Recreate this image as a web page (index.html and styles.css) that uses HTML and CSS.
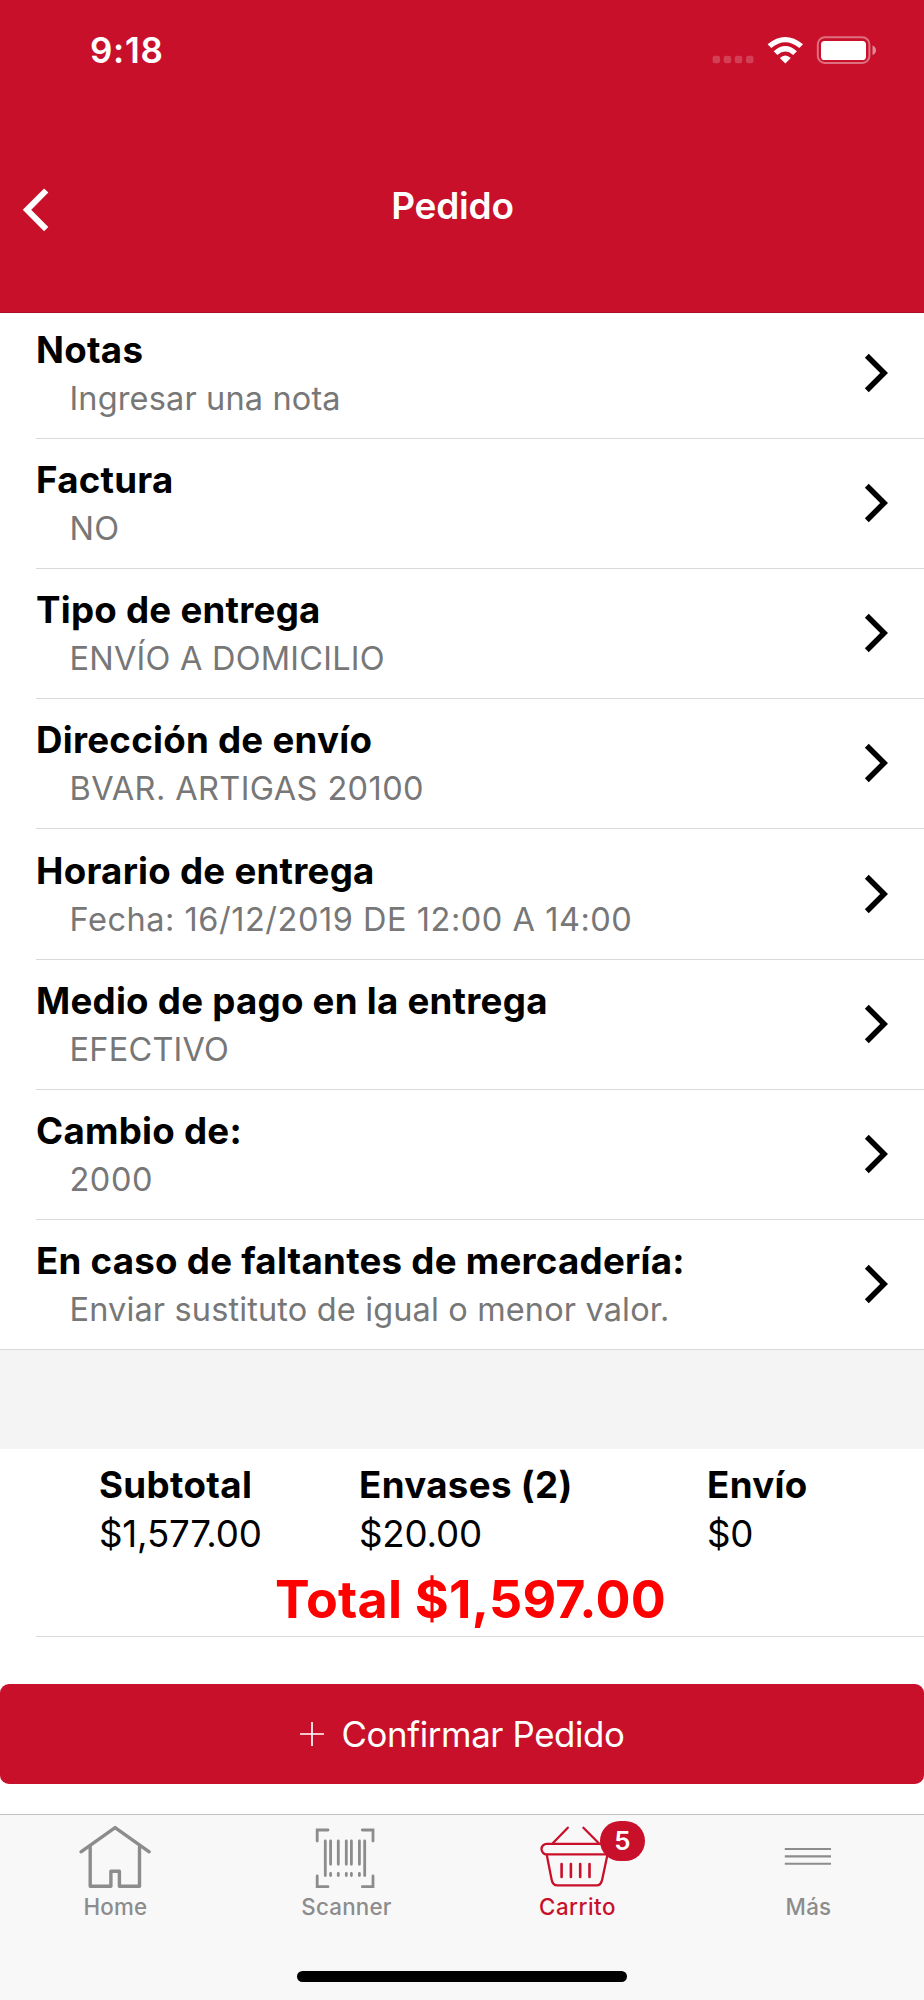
FILE: index.html
```html
<!DOCTYPE html>
<html lang="es">
<head>
<meta charset="utf-8">
<title>Pedido</title>
<link rel="stylesheet" href="styles.css">
</head>
<body>
<div class="screen">
  <header class="header">
    <div class="status">
      <span class="time">9:18</span>
      <svg class="status-icons" width="168" height="34" viewBox="710 33 168 34">
        <g fill="#fff" fill-opacity=".2">
          <rect x="712.6" y="55.8" width="7.5" height="7.5" rx="2.4"/>
          <rect x="723.7" y="55.8" width="7.5" height="7.5" rx="2.4"/>
          <rect x="734.8" y="55.8" width="7.5" height="7.5" rx="2.4"/>
          <rect x="746" y="55.8" width="7.5" height="7.5" rx="2.4"/>
        </g>
        <g fill="#fff">
          <path d="M767.6 44.2Q785.3 29.6 803 44.2L799.3 48Q785.3 36.4 771.3 48Z"/>
          <path d="M773.7 51.2Q785.3 40.8 796.9 51.2L793.2 55Q785.3 48.2 777.4 55Z"/>
          <path d="M779.8 58Q785.3 52.8 790.8 58L785.3 63.5Z"/>
          <rect x="821" y="41" width="45" height="19" rx="3.6"/>
        </g>
        <rect x="817.8" y="37.3" width="51.6" height="25.6" rx="7" fill="none" stroke="#fff" stroke-opacity=".4" stroke-width="2"/>
        <path d="M872.5 45.4Q876 46.800 876 50.200Q876 53.600 872.5 55Z" fill="#fff" fill-opacity=".5"/>
      </svg>
    </div>
    <nav class="nav">
      <svg class="back" width="30" height="48" viewBox="20 186 30 48"><path d="M46.200 190.500L27 209.800L46.200 229.100" fill="none" stroke="#fff" stroke-width="6"/></svg>
      <h1 class="title">Pedido</h1>
    </nav>
  </header>
  <main>
    <ul class="list">
      <li class="row"><div><h2 class="name">Notas</h2><p class="value">Ingresar una nota</p></div><svg class="chev" viewBox="0 0 26 42"><path d="M3.800 3.700L21.100 21L3.800 38.300"/></svg></li>
      <li class="row"><div><h2 class="name">Factura</h2><p class="value caps">NO</p></div><svg class="chev" viewBox="0 0 26 42"><path d="M3.800 3.700L21.100 21L3.800 38.300"/></svg></li>
      <li class="row"><div><h2 class="name">Tipo de entrega</h2><p class="value caps">ENVÍO A DOMICILIO</p></div><svg class="chev" viewBox="0 0 26 42"><path d="M3.800 3.700L21.100 21L3.800 38.300"/></svg></li>
      <li class="row"><div><h2 class="name">Dirección de envío</h2><p class="value address">BVAR. ARTIGAS 20100</p></div><svg class="chev" viewBox="0 0 26 42"><path d="M3.800 3.700L21.100 21L3.800 38.300"/></svg></li>
      <li class="row"><div><h2 class="name">Horario de entrega</h2><p class="value digits">Fecha: 16/12/2019 DE 12:00 A 14:00</p></div><svg class="chev" viewBox="0 0 26 42"><path d="M3.800 3.700L21.100 21L3.800 38.300"/></svg></li>
      <li class="row"><div><h2 class="name">Medio de pago en la entrega</h2><p class="value caps">EFECTIVO</p></div><svg class="chev" viewBox="0 0 26 42"><path d="M3.800 3.700L21.100 21L3.800 38.300"/></svg></li>
      <li class="row"><div><h2 class="name">Cambio de:</h2><p class="value digits">2000</p></div><svg class="chev" viewBox="0 0 26 42"><path d="M3.800 3.700L21.100 21L3.800 38.300"/></svg></li>
      <li class="row"><div><h2 class="name">En caso de faltantes de mercadería:</h2><p class="value">Enviar sustituto de igual o menor valor.</p></div><svg class="chev" viewBox="0 0 26 42"><path d="M3.800 3.700L21.100 21L3.800 38.300"/></svg></li>
    </ul>
    <div class="band"></div>
    <section class="summary">
      <div class="amounts">
        <div><div class="label">Subtotal</div><div class="amount">$1,577.00</div></div>
        <div><div class="label">Envases (2)</div><div class="amount">$20.00</div></div>
        <div><div class="label">Envío</div><div class="amount">$0</div></div>
      </div>
      <div class="total">Total $1,597.00</div>
    </section>
    <button class="confirm">
      <svg width="26" height="26" viewBox="0 0 26 26"><path d="M1 13H25M13 1V25" stroke="#fff" stroke-width="1.700"/></svg>
      <span>Confirmar Pedido</span>
    </button>
  </main>
  <footer class="tabbar">
    <div class="tabs">
      <a class="tab">
        <svg width="231" height="75" viewBox="0 1815 231 75" fill="none" stroke="currentColor" stroke-width="3.400" stroke-linecap="round" stroke-linejoin="round">
          <path d="M81 1851.800L115.100 1827.600L149.200 1851.800"/>
          <path d="M90.200 1847V1886.300H110.900V1871.300H119.400V1886.300H139.500V1847"/>
        </svg>
        <span>Home</span>
      </a>
      <a class="tab">
        <svg width="231" height="75" viewBox="231 1815 231 75" fill="none" stroke="currentColor" stroke-width="2.800" stroke-linecap="round">
          <path d="M317.200 1841V1830H328M362.300 1830H373V1841M317.200 1876V1886.700H328M362.300 1886.700H373V1876"/>
          <path d="M325.300 1841V1875.500M364.700 1841V1875.500M330.600 1841V1864.300M338.300 1841V1864.300M346.300 1841V1864.300M351.400 1841V1864.300M359.400 1841V1864.300M330.600 1873.500V1875.500M338.300 1873.500V1875.500M346.300 1873.500V1875.500M351.400 1873.500V1875.500M359.400 1873.500V1875.500"/>
        </svg>
        <span>Scanner</span>
      </a>
      <a class="tab active">
        <svg width="231" height="75" viewBox="462 1815 231 75" fill="none" stroke="currentColor" stroke-width="2.300" stroke-linecap="round">
          <path d="M567.800 1827.700L553 1843M583.400 1827.700L598.600 1843"/>
          <rect x="541.500" y="1843.800" width="69" height="10.600" rx="5.300"/>
          <path d="M546.800 1855L551.600 1879.500Q552.700 1885.400 557.500 1885.400H596.500Q601 1885.400 602.200 1879.500L607.400 1855"/>
          <path stroke-width="2.600" d="M561.600 1864V1877M570.900 1864V1877M580.200 1864V1877M589.500 1864V1877"/>
        </svg>
        <b class="badge">5</b>
        <span>Carrito</span>
      </a>
      <a class="tab">
        <svg width="231" height="75" viewBox="693 1815 231 75" fill="none" stroke="currentColor" stroke-width="2.100">
          <path d="M784.800 1849H831M784.800 1856.400H831M784.800 1863.700H831"/>
        </svg>
        <span>Más</span>
      </a>
    </div>
    <div class="home-bar"></div>
  </footer>
</div>
</body>
</html>
```

FILE: styles.css
```css
* { box-sizing: border-box; margin: 0; padding: 0; }
body { background: #fff; color: #000; font-family: Inter, "Liberation Sans", sans-serif; }
.screen { width: 924px; height: 2000px; display: flex; flex-direction: column; overflow: hidden; }
svg { display: block; flex: none; }

.header { height: 312.5px; background: #c8102b; color: #fff; border-bottom: 1px solid #ab0d26; }
.status { height: 100px; padding: 28px 46px 0 90px; display: flex; justify-content: space-between; align-items: flex-start; }
.status-icons { margin-top: 5px; }
.time { font-size: 35px; font-weight: 600; line-height: 45px; letter-spacing: 0.700px; }
.nav { padding: 86px 20px 0; display: grid; grid-template-columns: 30px 1fr 49px; }
.title { font-size: 37px; font-weight: 600; line-height: 40px; text-align: center; letter-spacing: -0.200px; }

.list { list-style: none; }
.row { height: 130.150px; margin-left: 36px; padding: 17.150px 35.500px 0 0; display: flex; justify-content: space-between; border-bottom: 1px solid #d9d9db; }
.row:first-child { height: 126.500px; padding-top: 13.300px; }
.row:last-child { margin-left: 0; padding-left: 36px; }
.name { font-size: 36.700px; font-weight: 700; line-height: 48px; letter-spacing: 0.250px; }
.value { font-size: 32.500px; line-height: 49px; color: #777; padding-left: 33.500px; letter-spacing: 0.140px; }
.value.caps { letter-spacing: 0.220px; }
.value.address { letter-spacing: 0.400px; }
.value.digits { letter-spacing: 0.530px; }
.chev { width: 26px; height: 42px; margin-top: 26px; fill: none; stroke: #000; stroke-width: 5.500; }

.band { height: 98.600px; background: #f4f4f4; }
.summary { height: 188.500px; margin-left: 36px; border-bottom: 1px solid #d9d9db; padding-top: 11.500px; }
.amounts { display: grid; grid-template-columns: 260px 348px auto; padding-left: 63px; }
.label { font-size: 36.700px; font-weight: 700; line-height: 49px; letter-spacing: 0.350px; }
.amount { font-size: 36.700px; line-height: 49px; letter-spacing: -0.200px; }
.total { color: #f00; font-size: 52px; font-weight: 700; line-height: 68px; margin-top: 8px; text-align: center; padding-right: 19px; letter-spacing: 0.220px; }
.confirm { width: 100%; height: 100px; margin-top: 46.500px; border: 0; border-radius: 9px; background: #c8102b; color: #fff; font: 400 34.800px/48px Inter, sans-serif; letter-spacing: -0.360px; display: flex; justify-content: center; align-items: center; gap: 16px; }
.confirm span { padding-top: 1px; }

.tabbar { height: 186px; margin-top: auto; background: #f8f8f8; border-top: 1px solid #c4c4c5; display: flex; flex-direction: column; }
.tabs { display: grid; grid-template-columns: repeat(4, 231px); }
.tab { position: relative; text-align: center; color: #8c8c8c; font-size: 22.300px; font-weight: 500; line-height: 34px; letter-spacing: 0.250px; }
.active { color: #c8102b; letter-spacing: 0.500px; }
.badge { position: absolute; left: 138px; top: 6px; width: 45px; height: 40px; border-radius: 20px; background: #c8102b; color: #fff; font-size: 26px; font-weight: 600; line-height: 40px; letter-spacing: 0; }
.home-bar { width: 330px; height: 11px; border-radius: 6px; background: #000; margin: auto auto 18px; }
```
